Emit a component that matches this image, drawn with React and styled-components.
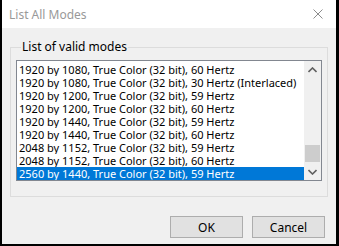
import React, { useState } from 'react'
import styled, { createGlobalStyle } from 'styled-components'

const modes = [
    '1920 by 1080, True Color (32 bit), 60 Hertz',
    '1920 by 1080, True Color (32 bit), 30 Hertz (Interlaced)',
    '1920 by 1200, True Color (32 bit), 59 Hertz',
    '1920 by 1200, True Color (32 bit), 60 Hertz',
    '1920 by 1440, True Color (32 bit), 59 Hertz',
    '1920 by 1440, True Color (32 bit), 60 Hertz',
    '2048 by 1152, True Color (32 bit), 59 Hertz',
    '2048 by 1152, True Color (32 bit), 60 Hertz',
    '2560 by 1440, True Color (32 bit), 59 Hertz',
]

const GlobalStyle = createGlobalStyle`
    html, body {
        margin: 0;
        padding: 0;
        background: #000;
    }
    * {
        box-sizing: border-box;
    }
`

export default function App() {
    const [selected, setSelected] = useState(8)

    return (
        <>
            <GlobalStyle />
            <Frame>
                <Window>
                    <TitleBar>
                        <Title>List All Modes</Title>
                        <CloseBtn>
                            <svg width="10" height="10" viewBox="0 0 10 10">
                                <path d="M0.5 0.5 L9.5 9.5 M9.5 0.5 L0.5 9.5" stroke="#8c8c8c" strokeWidth="1" fill="none" />
                            </svg>
                        </CloseBtn>
                    </TitleBar>

                    <Body>
                        <GroupBox>
                            <Legend>List of valid modes</Legend>
                            <ListBox>
                                <Rows>
                                    {modes.map((m, i) => (
                                        <Row key={i} $active={i === selected} onClick={() => setSelected(i)}>
                                            {m}
                                        </Row>
                                    ))}
                                </Rows>
                                <ScrollBar>
                                    <Arrow>
                                        <svg width="9" height="6" viewBox="0 0 9 6">
                                            <path d="M0.5 5 L4.5 1 L8.5 5" stroke="#606060" strokeWidth="1.6" fill="none" />
                                        </svg>
                                    </Arrow>
                                    <Track>
                                        <Thumb />
                                    </Track>
                                    <Arrow>
                                        <svg width="9" height="6" viewBox="0 0 9 6">
                                            <path d="M0.5 1 L4.5 5 L8.5 1" stroke="#606060" strokeWidth="1.6" fill="none" />
                                        </svg>
                                    </Arrow>
                                </ScrollBar>
                            </ListBox>
                        </GroupBox>

                        <Buttons>
                            <Button>OK</Button>
                            <Button>Cancel</Button>
                        </Buttons>
                    </Body>
                </Window>
            </Frame>
        </>
    )
}


const Frame = styled.div`
    width: 339px;
    height: 246px;
    background: #000;
    padding: 0 3px 2px 2px;
    display: flex;
`

const Window = styled.div`
    flex: 1;
    display: flex;
    flex-direction: column;
    background: #f0f0f0;
    font-family: "Noto Sans", "Open Sans", sans-serif;
`

const TitleBar = styled.div`
    height: 28px;
    background: #fff;
    display: flex;
    align-items: center;
    justify-content: space-between;
    padding: 0 8px 0 7px;
`

const Title = styled.div`
    font-size: 12px;
    color: #999;
`

const CloseBtn = styled.div`
    width: 20px;
    height: 20px;
    display: flex;
    align-items: center;
    justify-content: center;
`

const Body = styled.div`
    flex: 1;
    display: flex;
    flex-direction: column;
    padding: 11px 8px 6px 8px;
`

const GroupBox = styled.fieldset`
    margin: 0;
    padding: 5px 5px 15px 5px;
    border: 1px solid #dcdcdc;
    border-radius: 0;
    min-width: 0;
`

const Legend = styled.legend`
    font-size: 12px;
    line-height: 16px;
    color: #000;
    padding: 0 1px;
    margin-left: 5px;
`

const ListBox = styled.div`
    height: 121px;
    border: 1px solid #828790;
    background: #fff;
    display: flex;
`

const Rows = styled.div`
    flex: 1;
    padding-top: 2px;
    overflow: hidden;
`

const Row = styled.div`
    height: 13px;
    line-height: 13px;
    font-size: 11px;
    padding-left: 2px;
    white-space: nowrap;
    overflow: hidden;
    color: ${({ $active }) => ($active ? '#fff' : '#000')};
    background: ${({ $active }) => ($active ? '#0078d7' : 'transparent')};
`

const ScrollBar = styled.div`
    width: 17px;
    background: #f0f0f0;
    display: flex;
    flex-direction: column;
`

const Arrow = styled.div`
    height: 17px;
    display: flex;
    align-items: center;
    justify-content: center;
`

const Track = styled.div`
    flex: 1;
    display: flex;
    flex-direction: column;
    justify-content: flex-end;
    padding: 0 1px 1px 1px;
`

const Thumb = styled.div`
    height: 17px;
    background: #cdcdcd;
`

const Buttons = styled.div`
    margin-top: auto;
    display: flex;
    justify-content: flex-end;
    gap: 9px;
    padding-right: 3px;
`

const Button = styled.button`
    width: 73px;
    height: 22px;
    background: #e1e1e1;
    border: 1px solid #adadad;
    font-family: inherit;
    font-size: 12px;
    color: #000;
    padding: 0;
`
